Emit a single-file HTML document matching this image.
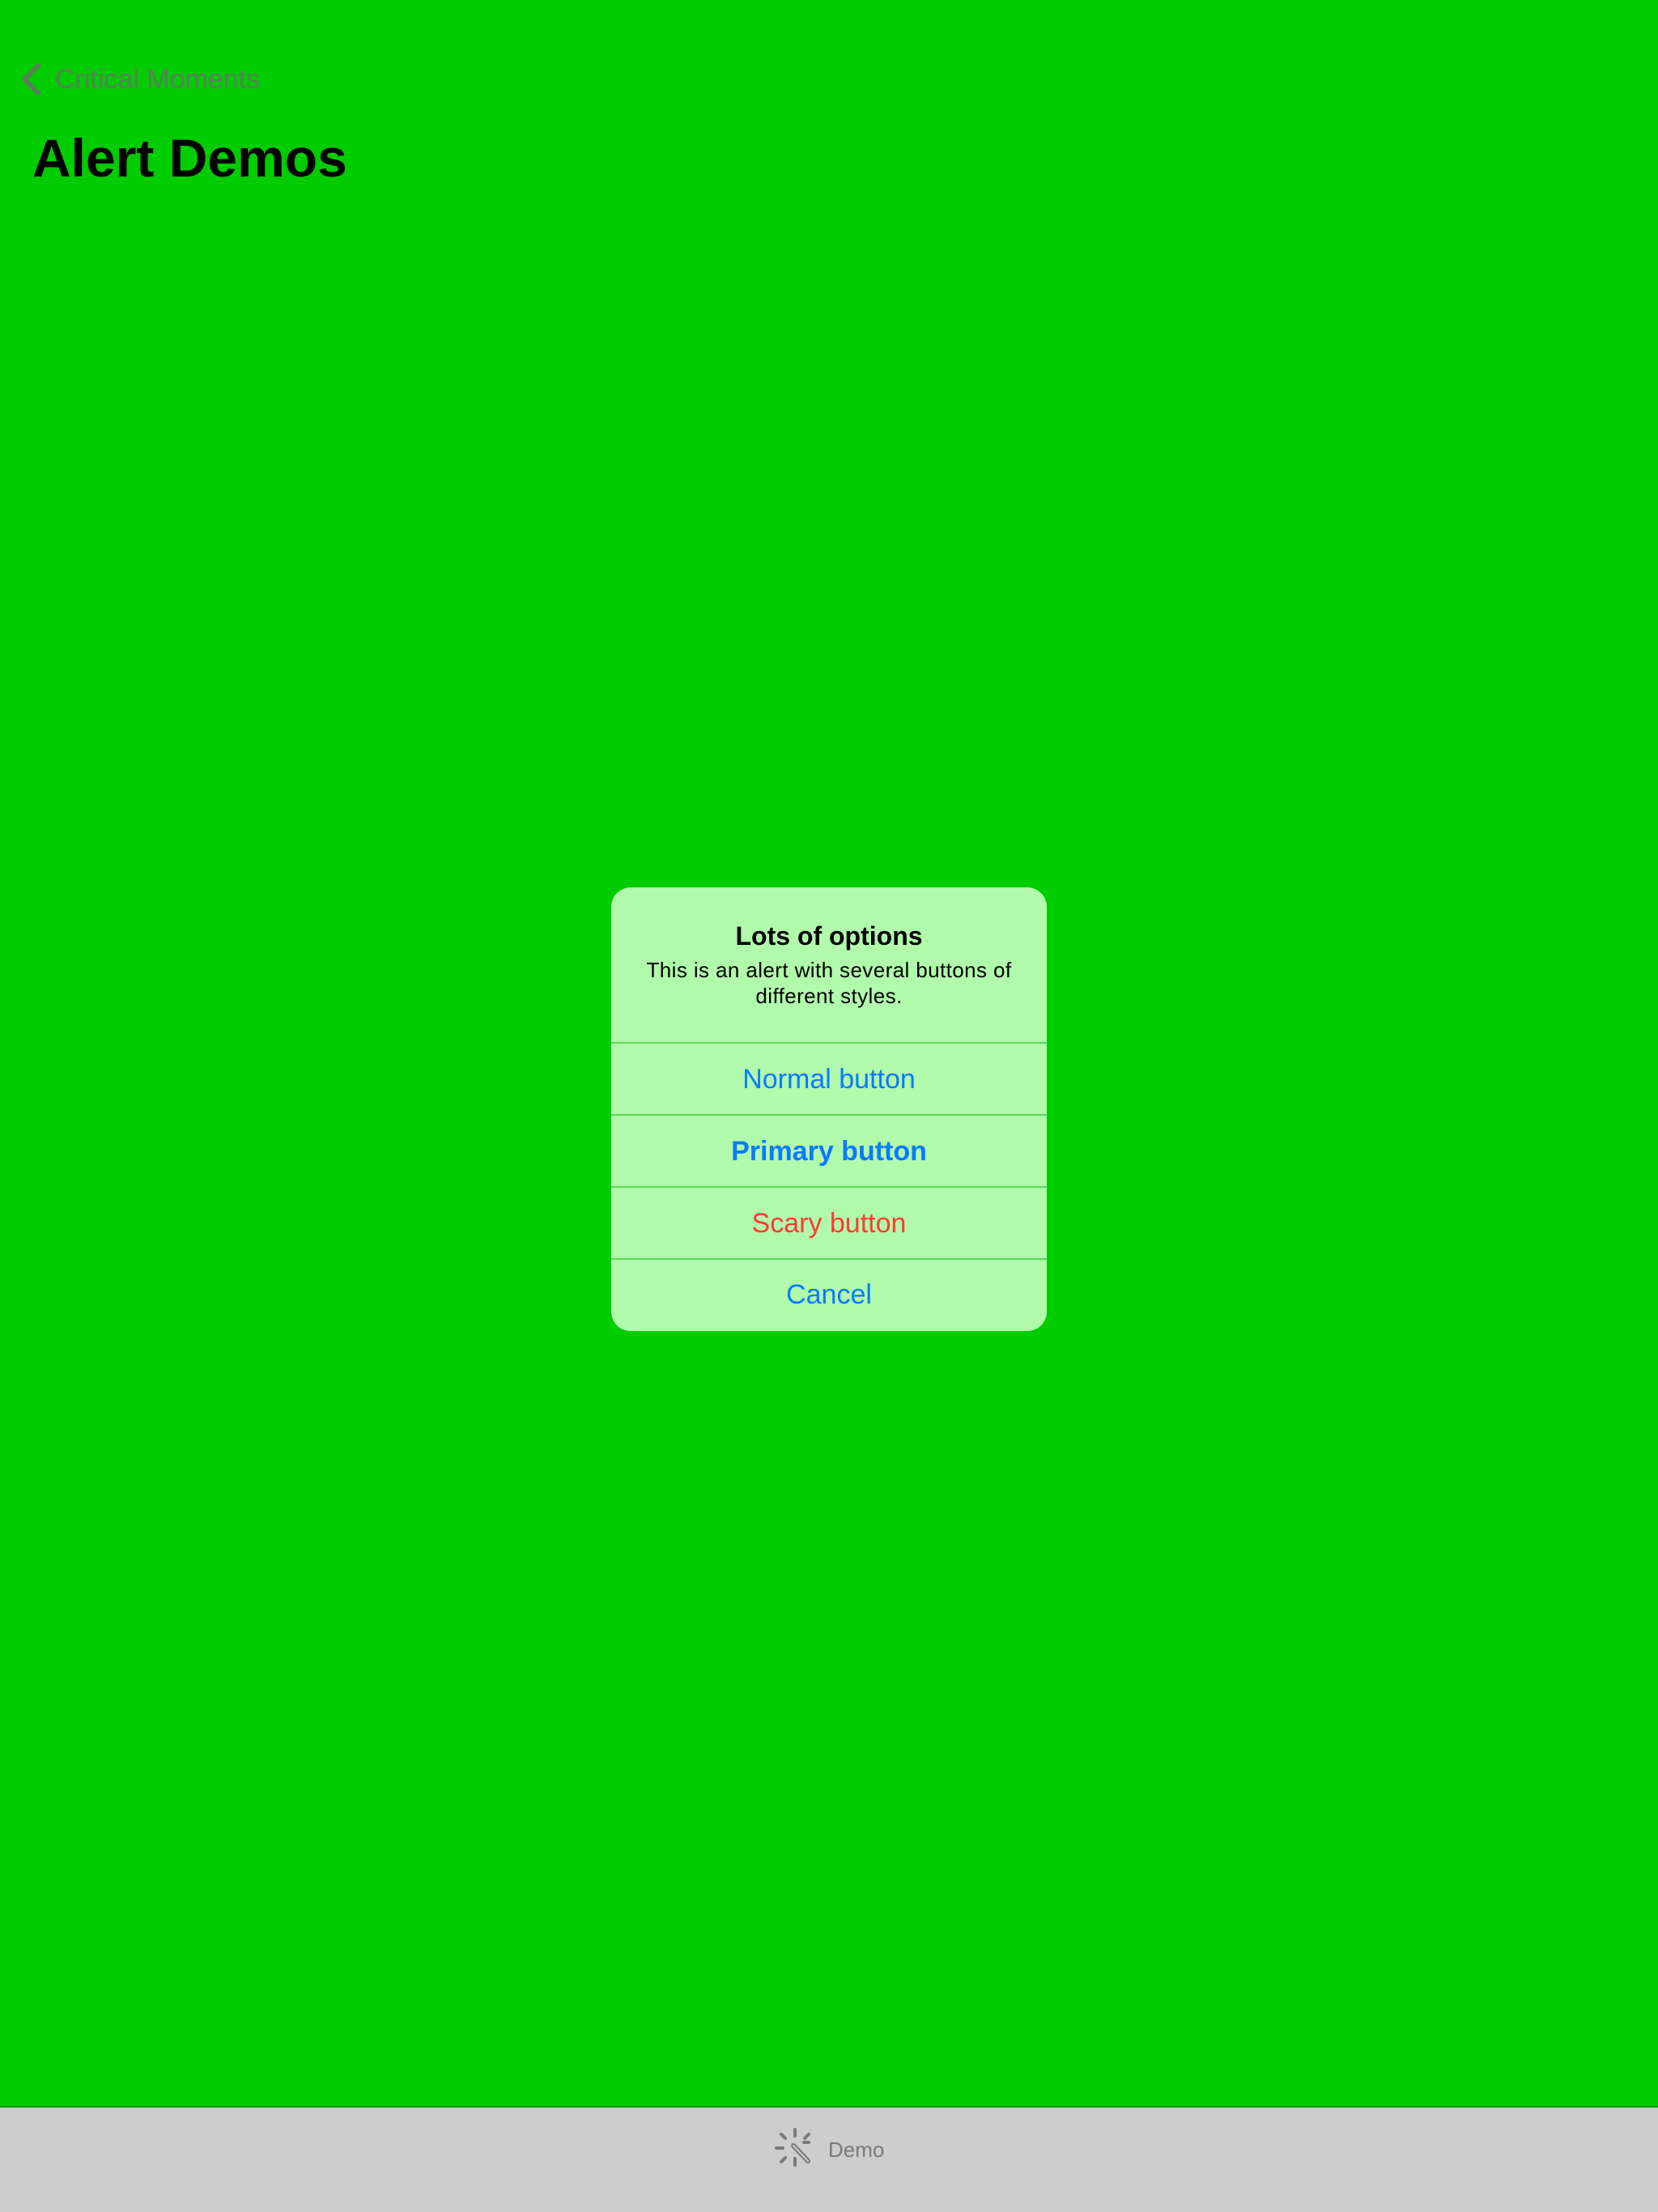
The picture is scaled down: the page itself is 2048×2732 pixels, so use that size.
<!DOCTYPE html>
<html><head><meta charset="utf-8"><style>
*{margin:0;padding:0;box-sizing:border-box}
body{width:2048px;height:2732px;background:#00cc00;position:relative;overflow:hidden;font-family:"Liberation Sans",sans-serif}
.abs{position:absolute;white-space:nowrap}
.back{left:68px;top:74px;font-size:34px;color:#5c7f5c;line-height:48px}
.title{left:40px;top:155px;font-size:66px;font-weight:bold;color:#000;line-height:80px}
.dlg{position:absolute;left:755px;top:1096px;width:538px;height:548px;background:#b1f9ab;border-radius:24px;overflow:hidden}
.dlg .h{position:absolute;left:0;width:100%;text-align:center}
.sep{position:absolute;left:0;width:100%;height:2px;background:#5ed85a}
.btn{position:absolute;left:0;width:100%;height:89px;text-align:center;font-size:34px;line-height:89px;color:#0a7aff}
.tab{position:absolute;left:0;top:2601px;width:2048px;height:131px;background:#cdcdcd;border-top:2px solid #0a9a0a}
</style></head><body>
<svg class="abs" style="left:24px;top:76px" width="30" height="44" viewBox="0 0 30 44"><path d="M23 5 L6 22 L23 39" fill="none" stroke="#5c7f5c" stroke-width="5.5" stroke-linecap="round" stroke-linejoin="round"/></svg>
<div class="abs back">Critical Moments</div>
<div class="abs title">Alert Demos</div>
<div class="dlg">
<div class="h" style="top:40px;font-size:32px;font-weight:bold;line-height:40px">Lots of options</div>
<div class="h" style="top:86px;font-size:26px;line-height:32px;letter-spacing:0.4px">This is an alert with several buttons of<br>different styles.</div>
<div class="sep" style="top:191px"></div>
<div class="btn" style="top:193px">Normal button</div>
<div class="sep" style="top:280px"></div>
<div class="btn" style="top:282px;font-weight:bold">Primary button</div>
<div class="sep" style="top:369px"></div>
<div class="btn" style="top:371px;color:#ff3b30">Scary button</div>
<div class="sep" style="top:458px"></div>
<div class="btn" style="top:459px">Cancel</div>
</div>
<div class="tab"></div>
<svg class="abs" style="left:955px;top:2626px" width="54" height="54" viewBox="0 0 54 54" stroke="#7a7a7a" stroke-width="4" stroke-linecap="round" fill="none">
<path d="M27 4v8M27 40v8M4 27h8M38 20h6M10 10l5 5M44 10l-5 5M10 44l5-5"/>
<path d="M25 24l18 19" stroke-width="6"/>
<path d="M25 24l18 19" stroke="#cdcdcd" stroke-width="2"/>
</svg>
<div class="abs" style="left:1023px;top:2640px;font-size:26px;color:#7a7a7a;line-height:30px">Demo</div>
</body></html>
